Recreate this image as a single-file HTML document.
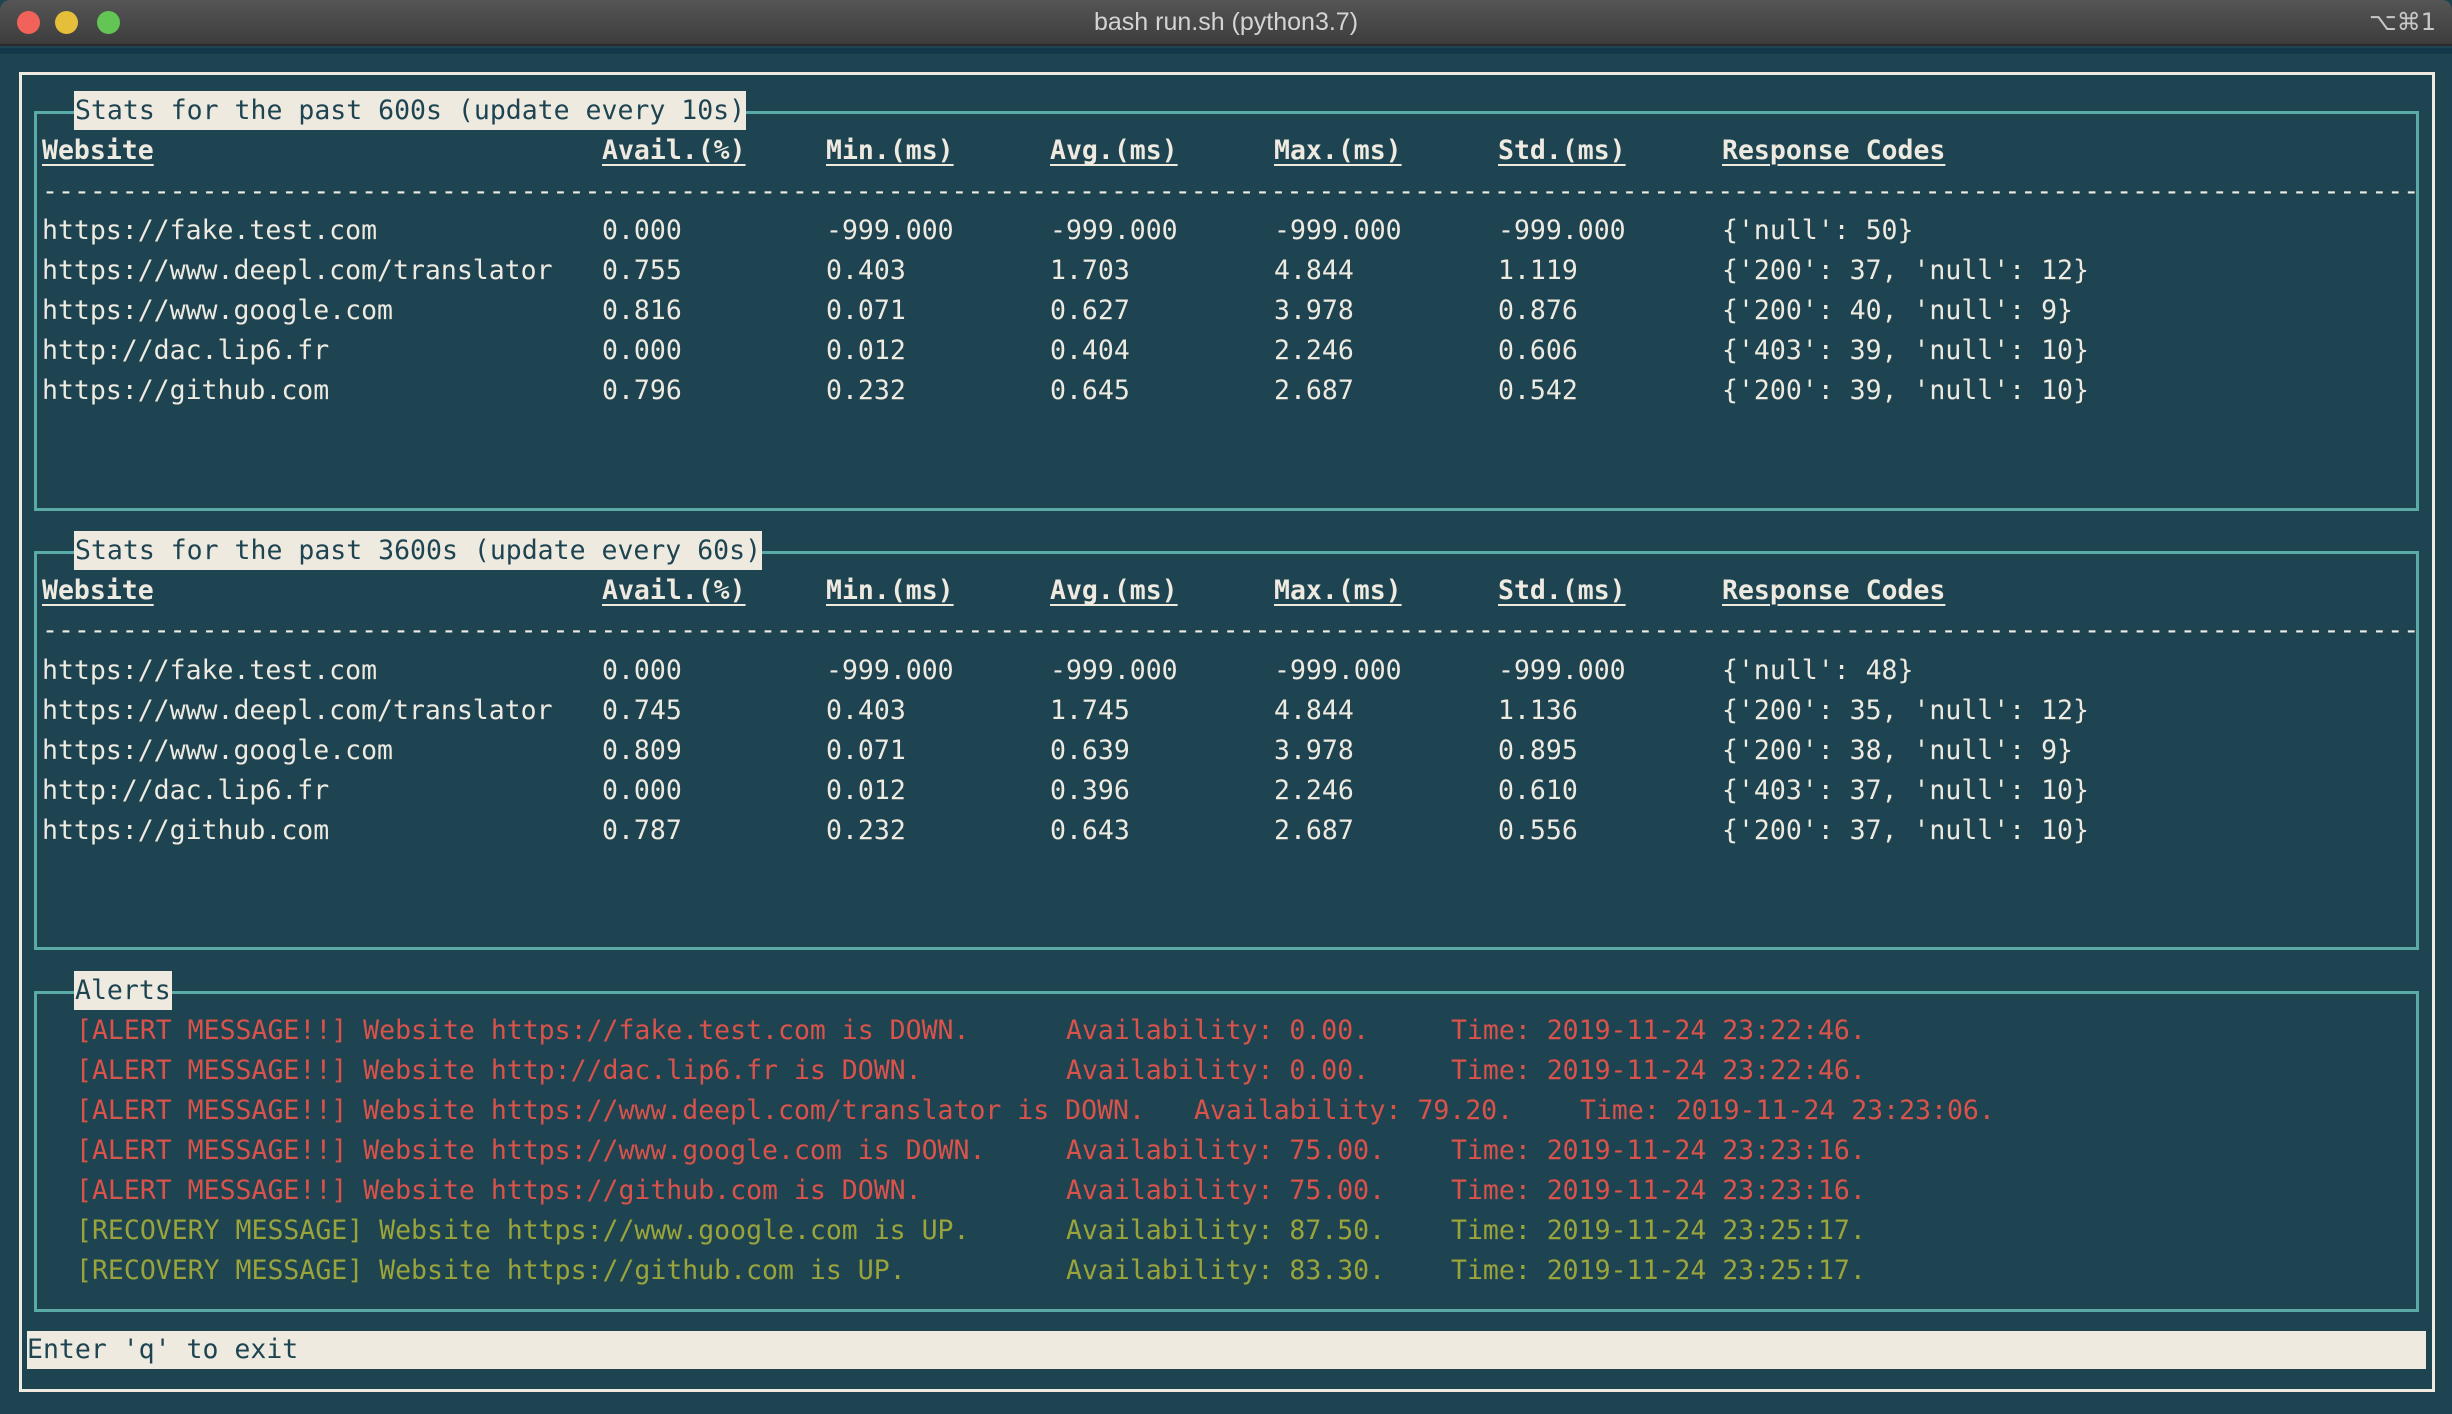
<!DOCTYPE html>
<html><head><meta charset="utf-8"><style>
*{margin:0;padding:0;box-sizing:border-box}
body{width:2452px;height:1414px;background:#1e4452;position:relative;overflow:hidden;font-family:"DejaVu Sans Mono","Liberation Mono",monospace;font-size:26.5px;color:#eeeae0}
#tb{position:absolute;left:0;top:0;width:2452px;height:46px;background:linear-gradient(#555555,#3d3d3d);border-bottom:2px solid #2a2a2a;border-radius:10px 10px 0 0}
#tb .t{position:absolute;left:0;width:2452px;top:8px;text-align:center;font-family:"Liberation Sans","DejaVu Sans",sans-serif;font-size:25px;color:#d4d4d4}
#tb .k{position:absolute;right:16px;top:8px;font-family:"DejaVu Sans",sans-serif;font-size:24px;color:#c8c8c8}
.dot{position:absolute;top:11px;width:23px;height:23px;border-radius:50%}
#strip{position:absolute;left:0;top:48px;width:2452px;height:6px;background:#12394a}
.outer{position:absolute;left:19px;top:72px;width:2416px;height:1320px;border:3px solid #eeeae0}
.box{position:absolute;left:34px;width:2385px;border:3px solid #5aaaa8}
.lab{position:absolute;height:39px;line-height:39px;background:#eeeae0;color:#1e4452;padding:0 1px}
.r{position:absolute;height:40px;line-height:40px;white-space:pre}
.row{position:absolute;left:0;width:2452px;height:40px;line-height:40px;white-space:pre}
.row span{position:absolute;top:0}
.c0{left:42px}.c1{left:602px}.c2{left:826px}.c3{left:1050px}.c4{left:1274px}.c5{left:1498px}.c6{left:1722px}
.h span{font-weight:bold;text-decoration:underline;text-underline-offset:5px;text-decoration-thickness:2px}
.red{color:#d9534a}.grn{color:#9aa43a}
#bar{position:absolute;left:27px;top:1331px;width:2399px;height:38px;line-height:38px;background:#eeeae0;color:#1e4452}
</style></head><body>
<div id="tb"><div class="dot" style="left:17px;background:#f1625a"></div><div class="dot" style="left:55px;background:#e5bf3a"></div><div class="dot" style="left:97px;background:#62c554"></div><div class="t">bash run.sh (python3.7)</div><div class="k">⌥⌘1</div></div>
<div id="strip"></div>
<div class="outer"></div>
<div class="box" style="top:111px;height:400px"></div>
<div class="box" style="top:551px;height:399px"></div>
<div class="box" style="top:991px;height:321px"></div>
<div class="lab" style="left:74px;top:91px">Stats for the past 600s (update every 10s)</div>
<div class="lab" style="left:74px;top:531px">Stats for the past 3600s (update every 60s)</div>
<div class="lab" style="left:74px;top:971px">Alerts</div>

<div class="row h" style="top:131px"><span class="c0">Website</span><span class="c1">Avail.(%)</span><span class="c2">Min.(ms)</span><span class="c3">Avg.(ms)</span><span class="c4">Max.(ms)</span><span class="c5">Std.(ms)</span><span class="c6">Response Codes</span></div>
<div class="r" style="top:172px;left:42px">-----------------------------------------------------------------------------------------------------------------------------------------------------</div>
<div class="row" style="top:211px"><span class="c0">https://fake.test.com</span><span class="c1">0.000</span><span class="c2">-999.000</span><span class="c3">-999.000</span><span class="c4">-999.000</span><span class="c5">-999.000</span><span class="c6">{'null': 50}</span></div>
<div class="row" style="top:251px"><span class="c0">https://www.deepl.com/translator</span><span class="c1">0.755</span><span class="c2">0.403</span><span class="c3">1.703</span><span class="c4">4.844</span><span class="c5">1.119</span><span class="c6">{'200': 37, 'null': 12}</span></div>
<div class="row" style="top:291px"><span class="c0">https://www.google.com</span><span class="c1">0.816</span><span class="c2">0.071</span><span class="c3">0.627</span><span class="c4">3.978</span><span class="c5">0.876</span><span class="c6">{'200': 40, 'null': 9}</span></div>
<div class="row" style="top:331px"><span class="c0">http://dac.lip6.fr</span><span class="c1">0.000</span><span class="c2">0.012</span><span class="c3">0.404</span><span class="c4">2.246</span><span class="c5">0.606</span><span class="c6">{'403': 39, 'null': 10}</span></div>
<div class="row" style="top:371px"><span class="c0">https://github.com</span><span class="c1">0.796</span><span class="c2">0.232</span><span class="c3">0.645</span><span class="c4">2.687</span><span class="c5">0.542</span><span class="c6">{'200': 39, 'null': 10}</span></div>

<div class="row h" style="top:571px"><span class="c0">Website</span><span class="c1">Avail.(%)</span><span class="c2">Min.(ms)</span><span class="c3">Avg.(ms)</span><span class="c4">Max.(ms)</span><span class="c5">Std.(ms)</span><span class="c6">Response Codes</span></div>
<div class="r" style="top:611px;left:42px">-----------------------------------------------------------------------------------------------------------------------------------------------------</div>
<div class="row" style="top:651px"><span class="c0">https://fake.test.com</span><span class="c1">0.000</span><span class="c2">-999.000</span><span class="c3">-999.000</span><span class="c4">-999.000</span><span class="c5">-999.000</span><span class="c6">{'null': 48}</span></div>
<div class="row" style="top:691px"><span class="c0">https://www.deepl.com/translator</span><span class="c1">0.745</span><span class="c2">0.403</span><span class="c3">1.745</span><span class="c4">4.844</span><span class="c5">1.136</span><span class="c6">{'200': 35, 'null': 12}</span></div>
<div class="row" style="top:731px"><span class="c0">https://www.google.com</span><span class="c1">0.809</span><span class="c2">0.071</span><span class="c3">0.639</span><span class="c4">3.978</span><span class="c5">0.895</span><span class="c6">{'200': 38, 'null': 9}</span></div>
<div class="row" style="top:771px"><span class="c0">http://dac.lip6.fr</span><span class="c1">0.000</span><span class="c2">0.012</span><span class="c3">0.396</span><span class="c4">2.246</span><span class="c5">0.610</span><span class="c6">{'403': 37, 'null': 10}</span></div>
<div class="row" style="top:811px"><span class="c0">https://github.com</span><span class="c1">0.787</span><span class="c2">0.232</span><span class="c3">0.643</span><span class="c4">2.687</span><span class="c5">0.556</span><span class="c6">{'200': 37, 'null': 10}</span></div>

<div class="r red" style="top:1011px;left:76px">[ALERT MESSAGE!!] Website https://fake.test.com is DOWN.</div><div class="r red" style="top:1011px;left:1066px">Availability: 0.00.</div><div class="r red" style="top:1011px;left:1451px">Time: 2019-11-24 23:22:46.</div>
<div class="r red" style="top:1051px;left:76px">[ALERT MESSAGE!!] Website http://dac.lip6.fr is DOWN.</div><div class="r red" style="top:1051px;left:1066px">Availability: 0.00.</div><div class="r red" style="top:1051px;left:1451px">Time: 2019-11-24 23:22:46.</div>
<div class="r red" style="top:1091px;left:76px">[ALERT MESSAGE!!] Website https://www.deepl.com/translator is DOWN.</div><div class="r red" style="top:1091px;left:1194px">Availability: 79.20.</div><div class="r red" style="top:1091px;left:1580px">Time: 2019-11-24 23:23:06.</div>
<div class="r red" style="top:1131px;left:76px">[ALERT MESSAGE!!] Website https://www.google.com is DOWN.</div><div class="r red" style="top:1131px;left:1066px">Availability: 75.00.</div><div class="r red" style="top:1131px;left:1451px">Time: 2019-11-24 23:23:16.</div>
<div class="r red" style="top:1171px;left:76px">[ALERT MESSAGE!!] Website https://github.com is DOWN.</div><div class="r red" style="top:1171px;left:1066px">Availability: 75.00.</div><div class="r red" style="top:1171px;left:1451px">Time: 2019-11-24 23:23:16.</div>
<div class="r grn" style="top:1211px;left:76px">[RECOVERY MESSAGE] Website https://www.google.com is UP.</div><div class="r grn" style="top:1211px;left:1066px">Availability: 87.50.</div><div class="r grn" style="top:1211px;left:1451px">Time: 2019-11-24 23:25:17.</div>
<div class="r grn" style="top:1251px;left:76px">[RECOVERY MESSAGE] Website https://github.com is UP.</div><div class="r grn" style="top:1251px;left:1066px">Availability: 83.30.</div><div class="r grn" style="top:1251px;left:1451px">Time: 2019-11-24 23:25:17.</div>

<div id="bar">Enter 'q' to exit</div>
</body></html>
